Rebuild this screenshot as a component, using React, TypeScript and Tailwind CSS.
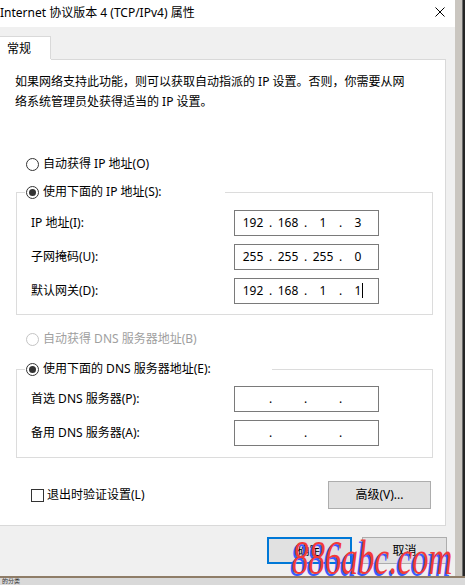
import { Fragment } from "react";

const font = "font-['Noto_Sans','Noto_Sans_CJK_SC',sans-serif]";

function Radio({ checked, disabled }: { checked?: boolean; disabled?: boolean }) {
  return (
    <span
      className={`flex h-[13px] w-[13px] shrink-0 items-center justify-center rounded-full border bg-white ${
        disabled ? "border-[#c4c4c4]" : "border-[#333333]"
      }`}
    >
      {checked && <span className="h-[7px] w-[7px] rounded-full bg-[#333333]" />}
    </span>
  );
}

function IpBox({ parts, caret }: { parts: string[]; caret?: boolean }) {
  return (
    <div className="flex h-[26px] w-[145px] items-center border border-[#7a7a7a] bg-white pl-[5px] text-[12px] text-black">
      {parts.map((p, i) => (
        <Fragment key={i}>
          {i > 0 && <span className="w-[9px] text-center">.</span>}
          <span className="relative w-[26px] text-center">
            {p}
            {caret && i === 3 && <span className="absolute left-[17px] top-[1px] h-[15px] w-px bg-black" />}
          </span>
        </Fragment>
      ))}
    </div>
  );
}

function Row({ label, parts, caret }: { label: string; parts: string[]; caret?: boolean }) {
  return (
    <div className="flex h-[26px] items-center">
      <span className="w-[203px]">{label}</span>
      <IpBox parts={parts} caret={caret} />
    </div>
  );
}

function GroupBox({
  legend,
  legendWidth,
  children,
  className,
}: {
  legend: string;
  legendWidth: string;
  children: React.ReactNode;
  className: string;
}) {
  return (
    <div className={`relative ml-[16px] w-[417px] border border-[#dcdcdc] ${className}`}>
      <div className={`absolute -top-[11px] left-[8px] flex h-[20px] items-center gap-[4px] bg-white pl-[1px] ${legendWidth}`}>
        <Radio checked />
        <span>{legend}</span>
      </div>
      <div className="flex flex-col gap-[8px] pl-[14px]">{children}</div>
    </div>
  );
}

export default function App() {
  return (
    <div className={`relative flex h-[585px] w-[465px] flex-col overflow-hidden bg-[#d6d6d6] text-[12px] text-black ${font}`}>
      <div className="flex h-[576px]">
        <div className="flex w-[455px] flex-col bg-[#f0f0f0]">
          <div className="flex h-[27px] items-start justify-between bg-white pr-[10px] pt-[4px]">
            <span className="leading-[17px]">Internet 协议版本 4 (TCP/IPv4) 属性</span>
            <svg width="10" height="10" viewBox="0 0 10 10" className="mt-[3px]">
              <path d="M0.5 0.5L9.5 9.5M9.5 0.5L0.5 9.5" stroke="#000" strokeWidth="1" />
            </svg>
          </div>

          <div className="flex h-[33px] items-end">
            <div className="flex h-[24px] w-[51px] items-center border-r border-t border-[#d9d9d9] bg-white pl-[7px]">
              常规
            </div>
          </div>

          <div className="-mt-px flex h-[467px] w-[446px] flex-col border-r border-b border-[#d9d9d9] bg-white">
            <div className="ml-[51px] h-px bg-[#d9d9d9]" />
            <p className="mt-[12px] px-[15px] leading-[20px]">
              如果网络支持此功能，则可以获取自动指派的 IP 设置。否则，你需要从网
              <br />
              络系统管理员处获得适当的 IP 设置。
            </p>

            <div className="ml-[26px] mt-[42px] flex h-[20px] items-center gap-[4px]">
              <Radio />
              <span>自动获得 IP 地址(O)</span>
            </div>

            <GroupBox legend="使用下面的 IP 地址(S):" legendWidth="w-[200px]" className="mt-[18px] h-[123px] pt-[17px]">
              <Row label="IP 地址(I):" parts={["192", "168", "1", "3"]} />
              <Row label="子网掩码(U):" parts={["255", "255", "255", "0"]} />
              <Row label="默认网关(D):" parts={["192", "168", "1", "1"]} caret />
            </GroupBox>

            <div className="ml-[26px] mt-[14px] flex h-[20px] items-center gap-[4px] text-[#a0a0a0]">
              <Radio disabled />
              <span>自动获得 DNS 服务器地址(B)</span>
            </div>

            <GroupBox legend="使用下面的 DNS 服务器地址(E):" legendWidth="w-[247px]" className="mt-[20px] h-[89px] pt-[16px]">
              <Row label="首选 DNS 服务器(P):" parts={["", "", "", ""]} />
              <Row label="备用 DNS 服务器(A):" parts={["", "", "", ""]} />
            </GroupBox>

            <div className="mt-[23px] flex h-[28px] items-center justify-between pl-[31px] pr-[14px]">
              <div className="flex items-center gap-[3px]">
                <span className="h-[13px] w-[13px] border border-[#333333] bg-white" />
                <span>退出时验证设置(L)</span>
              </div>
              <button className="flex h-[28px] w-[103px] items-center justify-center border border-[#adadad] bg-[#e1e1e1]">
                高级(V)...
              </button>
            </div>
          </div>

          <div className="mt-[11px] flex justify-end gap-[10px] pr-[8px]">
            <button className="flex h-[27px] w-[85px] items-center justify-center border-2 border-[#0078d7] bg-[#e1e1e1]">
              确定
            </button>
            <button className="flex h-[27px] w-[85px] items-center justify-center border border-[#adadad] bg-[#e1e1e1]">
              取消
            </button>
          </div>
        </div>
        <div className="flex w-[10px]">
          <div className="w-[7px] bg-[#cac6c0]" />
          <div className="w-px bg-[#6b6b6b]" />
          <div className="w-[2px] bg-[#262626]" />
        </div>
      </div>
      <div className="h-[2px] bg-[#8f7d68]" />
      <div className="flex-1 bg-[#d9d9d9] pl-[2px] text-[6px] leading-[7px] text-[#333]">的分类</div>

      <div className="pointer-events-none absolute left-[292px] top-[551px] origin-bottom scale-y-[1.45] font-['Liberation_Serif',serif] text-[33px] italic leading-[26px] text-[#f23a3a] [text-shadow:-2px_1px_0_#3a5cff]">
        886abc.com
      </div>
    </div>
  );
}
